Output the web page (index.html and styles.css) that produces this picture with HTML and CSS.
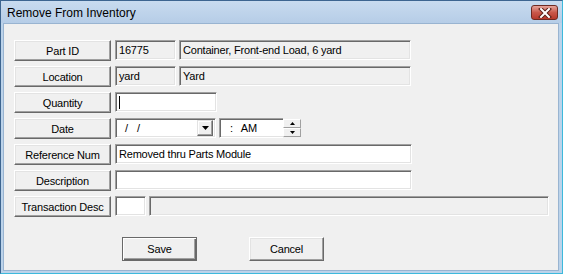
FILE: index.html
```html
<!DOCTYPE html>
<html lang="en">

<head>
  <meta charset="UTF-8">
  <title>Remove From Inventory</title>
  <link rel="stylesheet" href="styles.css">
</head>

<body>
  <div class="window">
    <div class="titlebar">
      <span class="title">Remove From Inventory</span>
      <span class="close">
        <svg width="14" height="10" viewBox="0 0 14 10">
          <path d="M3 1 L11 9 M11 1 L3 9" stroke="#5a1e16" stroke-width="4" stroke-linecap="square"/>
          <path d="M3 1 L11 9 M11 1 L3 9" stroke="#fff" stroke-width="2" stroke-linecap="square"/>
        </svg>
      </span>
    </div>

    <div class="content">
      <div class="row">
        <div class="lbl">Part ID</div>
        <div class="fld ro w-id">16775</div>
        <div class="fld ro w-desc">Container, Front-end Load, 6 yard</div>
      </div>
      <div class="row">
        <div class="lbl">Location</div>
        <div class="fld ro w-id">yard</div>
        <div class="fld ro w-desc">Yard</div>
      </div>
      <div class="row">
        <div class="lbl">Quantity</div>
        <div class="fld w-qty"><span class="caret"></span></div>
      </div>
      <div class="row">
        <div class="lbl">Date</div>
        <div class="fld combo">
          <span class="date-text">/ /</span>
          <span class="drop">
            <svg width="7" height="4" viewBox="0 0 7 4"><path d="M0 0 H7 L3.5 4 Z" fill="#000"/></svg>
          </span>
        </div>
        <div class="fld timebox">
          <span class="time-text">:</span><span class="ampm">AM</span>
          <span class="spin">
            <span class="spin-btn"><svg width="5" height="3" viewBox="0 0 5 3"><path d="M2.5 0 L5 3 H0 Z" fill="#000"/></svg></span>
            <span class="spin-btn"><svg width="5" height="3" viewBox="0 0 5 3"><path d="M0 0 H5 L2.5 3 Z" fill="#000"/></svg></span>
          </span>
        </div>
      </div>
      <div class="row">
        <div class="lbl">Reference Num</div>
        <div class="fld w-long">Removed thru Parts Module</div>
      </div>
      <div class="row">
        <div class="lbl">Description</div>
        <div class="fld w-long"></div>
      </div>
      <div class="row">
        <div class="lbl">Transaction Desc</div>
        <div class="fld w-code"></div>
        <div class="fld ro w-trans"></div>
      </div>

      <div class="actions">
        <button class="btn default">Save</button>
        <button class="btn">Cancel</button>
      </div>
    </div>
  </div>
</body>

</html>
```

FILE: styles.css
```css
body {
  margin: 0;
  font-family: "Liberation Sans", Arial, sans-serif;
}

.window {
  width: 563px;
  height: 274px;
  box-sizing: border-box;
  border: 1px solid #3d6590;
  border-right-color: #3db9dc;
  border-bottom-color: #3db9dc;
  background: #bcd3ea;
  padding: 0 3px 2px 2px;
  display: flex;
  flex-direction: column;
}

.titlebar {
  height: 22px;
  display: flex;
  align-items: center;
  justify-content: space-between;
  background: linear-gradient(#c8dbef, #b6cde7);
  margin: 0 -3px 0 -2px;
  padding: 0 4px 0 6px;
}

.title {
  font-size: 12px;
  color: #000;
  padding-top: 1px;
}

.close {
  width: 25px;
  height: 13px;
  border: 1px solid #6e2a22;
  border-radius: 3px;
  background: linear-gradient(#e6a49a, #c9584b 50%, #b7392c);
  display: flex;
  align-items: center;
  justify-content: center;
  margin-top: 1px;
}

.content {
  flex: 1;
  background: #f0f0f0;
  border: 1px solid #99b4d1;
  padding: 16px 0 0 10px;
  font-size: 11px;
  letter-spacing: -0.2px;
}

.row {
  display: flex;
  align-items: flex-start;
  gap: 3px;
  height: 21px;
  margin-bottom: 5px;
}

.lbl {
  width: 97px;
  height: 21px;
  box-sizing: border-box;
  margin-right: 1px;
  border: 1px solid;
  border-color: #fff #696969 #696969 #fff;
  box-shadow: inset -1px -1px #a0a0a0, inset 1px 1px #e3e3e3;
  background: #f0f0f0;
  display: flex;
  align-items: center;
  justify-content: center;
}

.fld {
  height: 20px;
  box-sizing: border-box;
  border: 1px solid;
  border-color: #a0a0a0 #fff #fff #a0a0a0;
  box-shadow: inset 1px 1px #696969, inset -1px -1px #e3e3e3;
  background: #fff;
  display: flex;
  align-items: center;
  padding-left: 3px;
  white-space: nowrap;
  position: relative;
}

.fld.ro {
  background: #f0f0f0;
}

.w-id { width: 61px; }
.w-desc { width: 232px; }
.w-qty { width: 102px; }
.w-long { width: 297px; }
.w-code { width: 31px; }
.w-trans { width: 400px; }

.caret {
  width: 1px;
  height: 13px;
  background: #000;
}

.combo {
  width: 101px;
  padding-right: 2px;
  justify-content: space-between;
}

.date-text {
  padding-left: 6px;
  letter-spacing: 3px;
}

.drop {
  width: 16px;
  height: 16px;
  box-sizing: border-box;
  border: 1px solid;
  border-color: #e3e3e3 #696969 #696969 #e3e3e3;
  box-shadow: inset -1px -1px #a0a0a0, inset 1px 1px #fff;
  background: #f0f0f0;
  display: flex;
  align-items: center;
  justify-content: center;
}

.timebox {
  width: 82px;
  padding-left: 10px;
}

.ampm {
  margin-left: 8px;
}

.spin {
  position: absolute;
  right: -1px;
  top: -1px;
  width: 18px;
  height: 20px;
  display: flex;
  flex-direction: column;
  background: #f0f0f0;
  padding: 1px 0;
  box-sizing: border-box;
}

.spin-btn {
  flex: 1;
  border: 1px solid;
  border-color: #fff #a0a0a0 #a0a0a0 #fff;
  background: #f0f0f0;
  display: flex;
  align-items: center;
  justify-content: center;
}

.actions {
  display: flex;
  gap: 52px;
  padding: 15px 0 0 108px;
}

.btn {
  width: 75px;
  height: 24px;
  box-sizing: border-box;
  font-family: inherit;
  font-size: 11px;
  letter-spacing: -0.2px;
  background: #f0f0f0;
  border: 1px solid;
  border-color: #fff #696969 #696969 #fff;
  box-shadow: inset -1px -1px #a0a0a0, inset 1px 1px #e3e3e3;
  padding: 0;
}

.btn.default {
  border: 1px solid #696969;
  box-shadow: inset 1px 1px #fff, inset -1px -1px #696969, inset -2px -2px #a0a0a0;
}
```
